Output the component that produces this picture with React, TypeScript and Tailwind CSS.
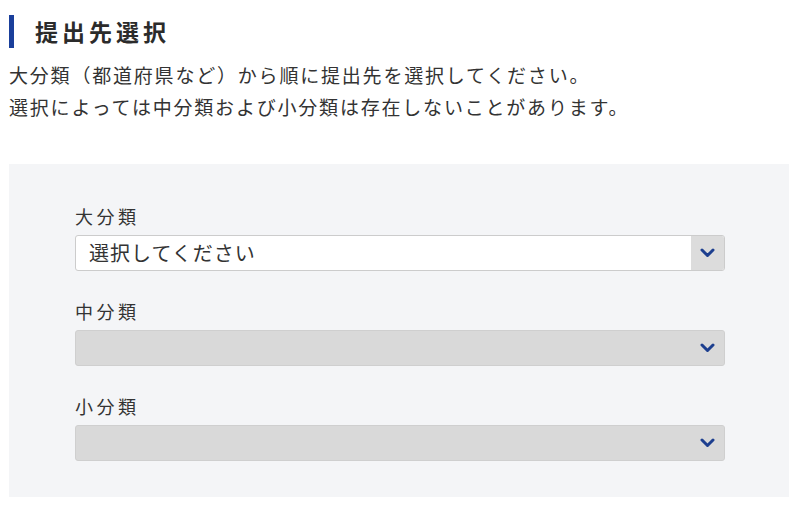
import React from "react";

const font = { fontFamily: '"Noto Sans CJK JP", "Noto Sans", sans-serif' };

function Chevron() {
  return (
    <svg width="15" height="10" viewBox="0 0 15 10">
      <path d="M2 2 L7.5 7.5 L13 2" fill="none" stroke="#1d3f8f" strokeWidth="3" strokeLinecap="round" strokeLinejoin="round" />
    </svg>
  );
}

function Select({ label, placeholder, disabled }: { label: string; placeholder?: string; disabled?: boolean }) {
  return (
    <div className="flex flex-col">
      <div className="text-[18px] leading-[26px] tracking-[3.5px] text-[#333]">{label}</div>
      <div
        className={
          "mt-[6px] flex h-[36px] items-stretch overflow-hidden rounded-[3px] border " +
          (disabled ? "border-[#cfcfcf] bg-[#d9d9d9]" : "border-[#cccccc] bg-white")
        }
      >
        <div className="flex flex-1 items-center pl-[13px] text-[20px] tracking-[1px] text-[#333]">{placeholder}</div>
        <div className={"flex w-[33px] items-center justify-center " + (disabled ? "bg-[#d9d9d9]" : "bg-[#dcdcdc]")}>
          <Chevron />
        </div>
      </div>
    </div>
  );
}

export default function App() {
  return (
    <div className="h-[508px] w-[800px] bg-white text-[#333]" style={font}>
      <div className="pl-[9px] pt-[15px]">
        <div className="flex items-center">
          <div className="h-[33px] w-[5px] bg-[#1a3f9b]" />
          <h2 className="ml-[21px] text-[23px] font-bold leading-[33px] tracking-[4px] text-[#2b2b2b]">提出先選択</h2>
        </div>
        <p className="mt-[11px] text-[19px] leading-[32px] tracking-[1.8px] text-[#333]">
          大分類（都道府県など）から順に提出先を選択してください。
          <br />
          選択によっては中分類および小分類は存在しないことがあります。
        </p>
      </div>
      <div className="ml-[9px] mr-[11px] mt-[41px] h-[333px] bg-[#f4f5f7] pl-[66px] pr-[64px] pt-[39px]">
        <div className="flex flex-col gap-[27px]">
          <Select label="大分類" placeholder="選択してください" />
          <Select label="中分類" disabled />
          <Select label="小分類" disabled />
        </div>
      </div>
    </div>
  );
}
